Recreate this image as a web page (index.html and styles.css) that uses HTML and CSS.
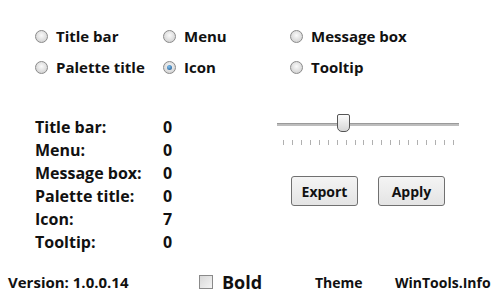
FILE: index.html
```html
<!DOCTYPE html>
<html lang="en">
<head>
  <meta charset="UTF-8" />
  <title>Font Size Tool</title>
  <link rel="stylesheet" href="styles.css">
</head>
<body>
  <div class="options">
    <label class="opt"><span class="radio"></span>Title bar</label>
    <label class="opt"><span class="radio"></span>Menu</label>
    <label class="opt"><span class="radio"></span>Message box</label>
    <label class="opt"><span class="radio"></span>Palette title</label>
    <label class="opt"><span class="radio on"></span>Icon</label>
    <label class="opt"><span class="radio"></span>Tooltip</label>
  </div>

  <div class="middle">
    <div class="stats">
      <span>Title bar:</span><span>0</span>
      <span>Menu:</span><span>0</span>
      <span>Message box:</span><span>0</span>
      <span>Palette title:</span><span>0</span>
      <span>Icon:</span><span>7</span>
      <span>Tooltip:</span><span>0</span>
    </div>
    <div class="controls">
      <div class="slider">
        <div class="track"></div>
        <div class="thumb"></div>
        <div class="ticks">
          <i></i><i></i><i></i><i></i><i></i><i></i><i></i><i></i><i></i><i></i>
          <i></i><i></i><i></i><i></i><i></i><i></i><i></i><i></i><i></i><i></i>
        </div>
      </div>
      <div class="buttons">
        <button class="btn">Export</button>
        <button class="btn">Apply</button>
      </div>
    </div>
  </div>

  <div class="footer">
    <span class="version">Version: 1.0.0.14</span>
    <label class="bold"><span class="check"></span>Bold</label>
    <span class="link theme">Theme</span>
    <span class="link">WinTools.Info</span>
  </div>
</body>
</html>
```

FILE: styles.css
```css
body { margin: 0; background: #fff; color: #111; font-family: "Open Sans", Arial, sans-serif; font-weight: 700; width: 500px; height: 294px; overflow: hidden; }

.options { display: grid; grid-template-columns: 128px 127px 150px; row-gap: 11px; padding: 26px 0 0 35px; }
.opt { display: flex; align-items: center; gap: 8px; font-size: 15px; height: 20px; }
.radio { width: 11px; height: 11px; border-radius: 50%; border: 1px solid #8a8a8a; background: radial-gradient(circle at 50% 40%, #fafafa, #c8c8c8); box-sizing: content-box; position: relative; }
.radio.on::after { content: ""; position: absolute; left: 3px; top: 3px; width: 5px; height: 5px; border-radius: 50%; background: radial-gradient(circle at 40% 35%, #7fc0ee, #17508a); }

.middle { display: flex; padding-top: 38px; }
.stats { display: grid; grid-template-columns: 128px 20px; grid-auto-rows: 23px; align-items: center; padding-left: 35px; font-size: 16px; }
.controls { display: flex; flex-direction: column; padding-left: 94px; }

.slider { position: relative; width: 182px; height: 34px; margin-top: -1px; }
.track { position: absolute; left: 0; right: 0; top: 9px; height: 2px; background: #bdbdbd; border-top: 1px solid #9a9a9a; }
.thumb { position: absolute; left: 60px; top: 0; width: 11px; height: 16px; border: 1px solid #555; border-radius: 2px 2px 5px 5px; background: linear-gradient(#fbfbfb, #d6d6d6); }
.ticks { position: absolute; left: 6px; right: 5px; top: 26px; display: flex; justify-content: space-between; }
.ticks i { width: 1px; height: 5px; background: #b0b0b0; }

.buttons { display: flex; gap: 20px; padding: 28px 0 0 14px; }
.btn { width: 67px; height: 30px; border: 1px solid #707070; border-radius: 3px; background: linear-gradient(#f4f4f4, #e4e4e4); font: 700 14px "Open Sans", Arial, sans-serif; color: #111; padding: 0; }

.footer { display: flex; align-items: center; padding: 17px 0 0 8px; height: 24px; }
.version { font-size: 15px; width: 191px; }
.bold { display: flex; align-items: center; gap: 9px; font-size: 18px; width: 116px; }
.check { width: 12px; height: 12px; border: 1px solid #8a8a8a; background: linear-gradient(135deg, #d8d8d8, #f4f4f4); }
.link { font-size: 14px; }
.theme { width: 80px; }
```
